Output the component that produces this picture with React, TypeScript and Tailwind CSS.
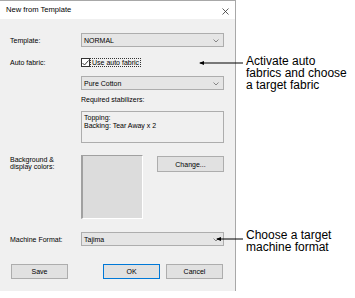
const Chevron = () => (
  <svg width="6" height="4" viewBox="0 0 6 4" className="absolute right-[4px] top-[5px]">
    <path d="M0.5 0.5 L3 3 L5.5 0.5" fill="none" stroke="#7a7a7a" strokeWidth="0.9" />
  </svg>
);

const Combo = ({ value }: { value: string }) => (
  <div className="relative flex h-[14px] w-[143px] items-center border border-[#adadad] bg-[#e5e5e5] pl-[2px] text-[7px] leading-none">
    {value}
    <Chevron />
  </div>
);

const Button = ({ label, primary }: { label: string; primary?: boolean }) => (
  <div
    className={`flex h-[15px] w-[57px] items-center justify-center bg-[#e1e1e1] text-[7px] leading-none ${
      primary ? "border border-[#0078d7]" : "border border-[#adadad]"
    }`}
  >
    {label}
  </div>
);

const Callout = ({ x, y, width, lines, ty }: { x: number; y: number; width: number; lines: string[]; ty: number }) => (
  <>
    <svg
      className="absolute"
      style={{ left: x, top: y - 3, width: width, height: 6 }}
      viewBox={`0 0 ${width} 6`}
    >
      <path d={`M1 3 H${width}`} stroke="#000" strokeWidth="1" />
      <path d="M0 3 L5 1 L5 5 Z" fill="#000" />
    </svg>
    <div
      className="absolute left-[246px] text-[12px] leading-[12px] text-black"
      style={{ top: ty, fontFamily: '"Liberation Sans", Arial, sans-serif' }}
    >
      {lines.map((l) => (
        <div key={l}>{l}</div>
      ))}
    </div>
  </>
);

export default function App() {
  return (
    <div
      className="relative h-[298px] w-[355px] overflow-hidden bg-white text-black"
      style={{ fontFamily: '"Liberation Sans", Arial, sans-serif' }}
    >
      <div className="flex w-[236px] flex-col border-r border-t border-[#a8a8a8]">
        {/* title bar */}
        <div className="relative flex h-[18px] items-center bg-white pl-[6px] text-[7.6px] leading-none">
          New from Template
          <svg width="7" height="7" viewBox="0 0 7 7" className="absolute right-[6px] top-[7px]">
            <path d="M0.5 0.5 L6.5 6.5 M6.5 0.5 L0.5 6.5" stroke="#333" strokeWidth="0.8" />
          </svg>
        </div>

        <div className="flex flex-col bg-[#f0f0f0] pb-[12px] pl-[10px] text-[7px] leading-none">
          <div className="mt-[14px] flex items-center">
            <div className="w-[71px]">Template:</div>
            <Combo value="NORMAL" />
          </div>

          <div className="mt-[11px] flex h-[9px] items-center">
            <div className="w-[71px]">Auto fabric:</div>
            <div className="flex h-[9px] w-[9px] items-center justify-center border border-[#333] bg-white">
              <svg width="7" height="6" viewBox="0 0 7 6">
                <path d="M0.5 3 L2.5 5 L6.5 0.5" fill="none" stroke="#222" strokeWidth="0.9" />
              </svg>
            </div>
            <div className="flex h-[9px] items-center border border-dotted border-[#333] px-[1px]">Use auto fabric</div>
          </div>

          <div className="ml-[71px] mt-[9px]">
            <Combo value="Pure Cotton" />
          </div>

          <div className="ml-[71px] mt-[6px] h-[8px]">Required stabilizers:</div>

          <div className="ml-[71px] mt-[7px] h-[32px] w-[143px] border border-[#adadad] px-[2px] pt-[2px] leading-[8px]">
            <div>Topping:</div>
            <div>Backing: Tear Away x 2</div>
          </div>

          <div className="mt-[12px] flex">
            <div className="w-[71px] pt-[1px] leading-[7px]">
              Background &amp;
              <br />
              display colors:
            </div>
            <div className="h-[64px] w-[62px] border-l-2 border-t border-b border-r border-[#a0a0a0] border-b-white border-r-white bg-[#dcdcdc]" />
            <div className="ml-[14px] mt-[1px] flex h-[16px] w-[67px] items-center justify-center border border-[#adadad] bg-[#e1e1e1]">
              Change...
            </div>
          </div>

          <div className="mt-[13px] flex items-center">
            <div className="w-[71px]">Machine Format:</div>
            <Combo value="Tajima" />
          </div>

          <div className="mt-[18px] flex pl-[1px]">
            <Button label="Save" />
            <div className="ml-[35px]">
              <Button label="OK" primary />
            </div>
            <div className="ml-[6px]">
              <Button label="Cancel" />
            </div>
          </div>
        </div>
      </div>

      <Callout x={199} y={63} width={44} ty={55} lines={["Activate auto", "fabrics and choose", "a target fabric"]} />
      <Callout x={216} y={239} width={27} ty={229} lines={["Choose a target", "machine format"]} />
    </div>
  );
}
